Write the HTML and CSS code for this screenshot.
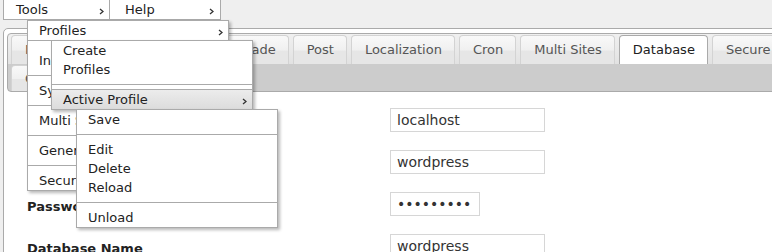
FILE: index.html
```html
<!DOCTYPE html>
<html lang="en">
<head>
<meta charset="utf-8">
<title>Config</title>
<link rel="stylesheet" href="styles.css">
</head>
<body>
<div class="menubar">
  <div class="mb-item mb-tools"><span>Tools</span><svg class="chev" viewBox="0 0 5 7"><path d="M1 1 L4 3.5 L1 6"/></svg></div>
  <div class="mb-item mb-help"><span>Help</span><svg class="chev" viewBox="0 0 5 7"><path d="M1 1 L4 3.5 L1 6"/></svg></div>
  <ul class="menu menu-tools">
    <li class="mi mi-open"><span>Profiles</span><svg class="chev" viewBox="0 0 5 7"><path d="M1 1 L4 3.5 L1 6"/></svg>
      <ul class="menu menu-profiles">
        <li class="mi"><span>Create</span></li>
        <li class="mi"><span>Profiles</span></li>
        <li class="sep"></li>
        <li class="mi mi-active"><span>Active Profile</span><svg class="chev" viewBox="0 0 5 7"><path d="M1 1 L4 3.5 L1 6"/></svg>
          <ul class="menu menu-active">
            <li class="mi"><span>Save</span></li>
            <li class="sep"></li>
            <li class="mi"><span>Edit</span></li>
            <li class="mi"><span>Delete</span></li>
            <li class="mi"><span>Reload</span></li>
            <li class="sep"></li>
            <li class="mi"><span>Unload</span></li>
          </ul>
        </li>
      </ul>
    </li>
    <li class="mi"><span>Install</span></li>
    <li class="sep"></li>
    <li class="mi"><span>System</span></li>
    <li class="sep"></li>
    <li class="mi"><span>Multi Sites</span></li>
    <li class="sep"></li>
    <li class="mi"><span>General</span></li>
    <li class="sep"></li>
    <li class="mi"><span>Security</span></li>
  </ul>
</div>

<div class="panel">
  <div class="tabs-nav">
    <ul class="tab-row">
      <li class="tab">Networks</li>
      <li class="tab">Installation</li>
      <li class="tab">Upgrade</li>
      <li class="tab">Post</li>
      <li class="tab">Localization</li>
      <li class="tab">Cron</li>
      <li class="tab">Multi Sites</li>
      <li class="tab tab-active">Database</li>
      <li class="tab">Secure Keys</li>
    </ul>
    <ul class="tab-row tab-row-2">
      <li class="tab">Custom</li>
    </ul>
  </div>
  <div class="panel-body">
    <div class="form">
      <label class="label" for="f-host">Database Host</label>
      <input class="field" id="f-host" type="text" value="localhost">
      <label class="label" for="f-user">Database User</label>
      <input class="field" id="f-user" type="text" value="wordpress">
      <label class="label" for="f-pass">Password</label>
      <input class="field field-short" id="f-pass" type="password" value="wordpress">
      <label class="label" for="f-name">Database Name</label>
      <input class="field" id="f-name" type="text" value="wordpress">
    </div>
  </div>
</div>
</body>
</html>
```

FILE: styles.css
```css
html, body {
  margin: 0;
  overflow: hidden;
}
body {
  background: #efefef;
  font-family: "DejaVu Sans", Verdana, sans-serif;
  font-size: 13px;
  color: #222;
}

/* menubar */
.menubar {
  position: relative;
  z-index: 10;
  display: flex;
  height: 20px;
  margin-left: 3px;
}
.mb-item {
  box-sizing: border-box;
  height: 20px;
  line-height: 19px;
  background: #fff;
  border-right: 1px solid #aaa;
  border-bottom: 1px solid #aaa;
  display: flex;
  align-items: center;
  justify-content: space-between;
}
.mb-tools {
  width: 107px;
  border-left: 1px solid #aaa;
  padding: 0 5px 0 12px;
}
.mb-help {
  width: 111px;
  padding: 0 6px 0 15px;
}
.chev {
  flex: none;
  width: 5px;
  height: 7px;
  margin-top: 4px;
}
.chev path {
  fill: none;
  stroke: #333;
  stroke-width: 1.3;
}

/* dropdown menus */
.menu {
  position: absolute;
  box-sizing: border-box;
  width: 202px;
  margin: 0;
  padding: 0;
  list-style: none;
  background: #fff;
  border: 1px solid #aaa;
  box-shadow: 2px 2px 3px rgba(0, 0, 0, 0.28);
}
.menu-tools {
  left: 24px;
  top: 20px;
}
.menu-profiles {
  left: 23px;
  top: 19px;
}
.menu-active {
  left: 24px;
  top: 68px;
}
.mi {
  height: 19px;
  line-height: 19px;
  padding: 0 5px 0 11px;
  display: flex;
  align-items: center;
  justify-content: space-between;
  white-space: nowrap;
  color: #222;
}
.mi-open {
  border-bottom: 1px solid #aaa;
  margin-bottom: 10px;
}
.mi-active {
  margin: -1px 0 -1px;
  border-top: 1px solid #aaa;
  border-bottom: 1px solid #aaa;
  background: linear-gradient(#ececec, #dcdcdc);
}
.sep {
  height: 0;
  margin: 5px 0;
  border-top: 1px solid #aaa;
}

/* tabs panel */
.panel {
  width: 960px;
  margin: 8px 0 0 3px;
  padding: 4px 3px;
  background: #fff;
  border: 1px solid #aaa;
  border-radius: 5px;
}
.tabs-nav {
  padding: 1px 3px 0;
  border: 1px solid #aaa;
  border-radius: 4px;
  background: linear-gradient(#f0f0f0, #e2e2e2 30px, #cccccc 30px);
}
.tab-row {
  display: flex;
  gap: 4px;
  margin: 0;
  padding: 0;
  list-style: none;
}
.tab-row-2 {
  margin-top: 1px;
}
.tab {
  flex: none;
  box-sizing: border-box;
  height: 29px;
  line-height: 28px;
  padding: 0 12px 0 13px;
  border: 1px solid #d3d3d3;
  border-bottom: 0;
  border-radius: 4px 4px 0 0;
  background: linear-gradient(#f9f9f9, #f0f0f0 50%, #e6e6e6 54%, #e6e6e6);
  color: #555;
  white-space: nowrap;
}
.tab-row-2 .tab {
  height: 26px;
  line-height: 25px;
}
.tab-active {
  background: #fff;
  border-color: #aaa;
  color: #212121;
}

/* form */
.panel-body {
  padding: 16px 0 0 20px;
}
.form {
  display: grid;
  grid-template-columns: 363px auto;
  row-gap: 18px;
  align-items: center;
  justify-items: start;
}
.label {
  font-weight: bold;
  padding-top: 4px;
  color: #222;
}
.field {
  display: block;
  box-sizing: border-box;
  width: 155px;
  height: 24px;
  margin: 0;
  padding: 0 6px;
  border: 1px solid #d6d6d6;
  background: #fff;
  font-family: "DejaVu Sans", Verdana, sans-serif;
  font-size: 14px;
  color: #333;
  outline: none;
}
.field-short {
  width: 90px;
}
```
